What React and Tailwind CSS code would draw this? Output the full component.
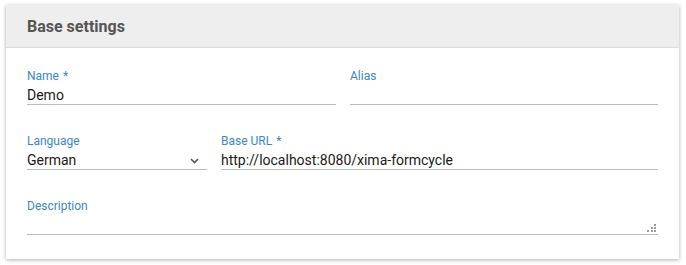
function Field({ label, required, value, className = '' }) {
  return (
    <div className={`flex flex-col ${className}`}>
      <div className="h-[14px] text-[12px] leading-[14px] text-[#3d87c4]">
        {label}
        {required && <span className="ml-[4px]">*</span>}
      </div>
      <div className="mt-[3px] h-[19px] border-b border-[#bdbdbd] text-[14px] leading-[18px] text-[#1a1a1a]">
        {value}
      </div>
    </div>
  )
}

function SelectField({ label, value, className = '' }) {
  return (
    <div className={`flex flex-col ${className}`}>
      <div className="h-[14px] text-[12px] leading-[14px] text-[#3d87c4]">{label}</div>
      <div className="mt-[3px] h-[19px] border-b border-[#bdbdbd] flex items-center justify-between text-[14px] leading-[18px] text-[#1a1a1a]">
        <span>{value}</span>
        <svg width="9" height="6" viewBox="0 0 9 6" fill="none" className="mr-[8px] mt-[1px]">
          <path d="M1 1L4.5 4.5L8 1" stroke="#555" strokeWidth="1.6" />
        </svg>
      </div>
    </div>
  )
}

function TextAreaField({ label }) {
  return (
    <div className="flex flex-col">
      <div className="h-[14px] text-[12px] leading-[14px] text-[#3d87c4]">{label}</div>
      <div className="mt-[3px] h-[19px] border-b border-[#bdbdbd] flex items-end justify-end">
        <svg width="9" height="9" viewBox="0 0 9 9" className="mr-[2px] mb-[1px]">
          <rect x="7" y="0" width="2" height="2" fill="#9e9e9e" />
          <rect x="4" y="3" width="2" height="2" fill="#9e9e9e" />
          <rect x="7" y="3" width="2" height="2" fill="#9e9e9e" />
          <rect x="0" y="6" width="2" height="2" fill="#9e9e9e" />
          <rect x="4" y="6" width="2" height="2" fill="#9e9e9e" />
          <rect x="7" y="6" width="2" height="2" fill="#9e9e9e" />
        </svg>
      </div>
    </div>
  )
}

export default function App() {
  return (
    <div className="w-[686px] h-[265px] bg-white pt-[5px] pl-[6px] font-['Roboto',sans-serif]">
      <div className="w-[673px] bg-white shadow-[0_1px_4px_rgba(0,0,0,0.32)]">
        <div className="h-[43px] bg-[#eeeeee] border-b border-[#dcdcdc] px-[21px] pt-[12px]">
          <div className="text-[16px] leading-[20px] font-bold text-[#555555]">Base settings</div>
        </div>
        <div className="px-[21px] pt-[21px] pb-[24px] flex flex-col gap-[29px]">
          <div className="flex gap-[14px]">
            <Field className="w-[309px]" label="Name" required value="Demo" />
            <Field className="flex-1" label="Alias" value="" />
          </div>
          <div className="flex gap-[14px]">
            <SelectField className="w-[180px]" label="Language" value="German" />
            <Field className="flex-1" label="Base URL" required value="http://localhost:8080/xima-formcycle" />
          </div>
          <TextAreaField label="Description" />
        </div>
      </div>
    </div>
  )
}
